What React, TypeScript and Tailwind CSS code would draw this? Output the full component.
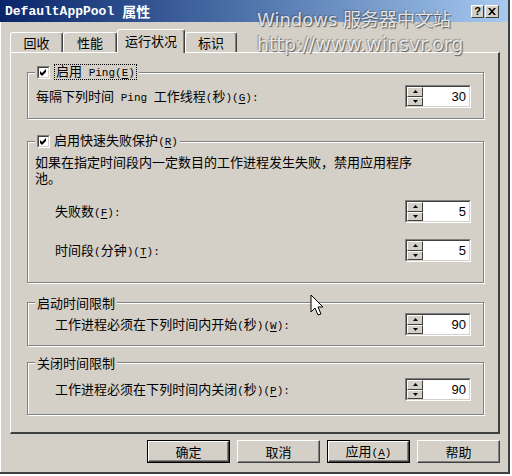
import React from 'react';
import clsx from 'clsx';

// mnemonic letters are marked with "_" in front of them
function Label({ text }: { text: string }) {
  const out: React.ReactNode[] = [];
  let under = false;
  [...text].forEach((ch, i) => {
    if (ch === '_') {
      under = true;
      return;
    }
    const ascii = ch.charCodeAt(0) < 128;
    out.push(
      <span
        key={i}
        className={clsx(ascii && "font-['Liberation_Mono',monospace] text-[11px]", under && 'underline underline-offset-2')}
      >
        {ch === ' ' ? '\u00a0' : ch}
      </span>
    );
    under = false;
  });
  return <span className="whitespace-nowrap">{out}</span>;
}

function Check() {
  return (
    <span className="flex h-[13px] w-[13px] border border-t-[#808080] border-l-[#808080] border-b-white border-r-white">
      <span className="flex flex-1 items-center justify-center border border-t-[#404040] border-l-[#404040] border-b-[#d4d0c8] border-r-[#d4d0c8] bg-white">
        <svg width="7" height="7" viewBox="0 0 7 7">
          <path d="M0 2 L2 4 L6 0 L6 3 L2 7 L0 5 Z" fill="#000" />
        </svg>
      </span>
    </span>
  );
}

function SpinBtn({ up }: { up?: boolean }) {
  return (
    <div className="flex flex-1 items-center justify-center border border-t-white border-l-white border-b-[#404040] border-r-[#404040] bg-[#d4d0c8]">
      <svg width="5" height="3" viewBox="0 0 5 3">
        <path d={up ? 'M2.5 0 L5 3 L0 3 Z' : 'M0 0 L5 0 L2.5 3 Z'} fill="#000" />
      </svg>
    </div>
  );
}

function Spin({ v }: { v: string }) {
  return (
    <div className="flex h-[23px] w-[66px] border border-t-[#808080] border-l-[#808080] border-b-white border-r-white">
      <div className="flex flex-1 border border-t-[#404040] border-l-[#404040] border-b-[#d4d0c8] border-r-[#d4d0c8]">
        <div className="flex w-[16px] flex-col">
          <SpinBtn up />
          <SpinBtn />
        </div>
        <div className="flex flex-1 items-center justify-end bg-white pr-[3px] font-['Liberation_Sans',sans-serif] text-[13px] text-black">
          {v}
        </div>
      </div>
    </div>
  );
}

function Group({ title, className, children }: { title: React.ReactNode; className: string; children?: React.ReactNode }) {
  return (
    <div className={clsx('ml-[16px] mr-[14px] flex flex-col border border-[#808080] shadow-[inset_1px_1px_0_#fff,1px_1px_0_#fff]', className)}>
      <div className="-mt-[9px] ml-[7px] flex h-[16px] w-fit items-center gap-[4px] bg-[#d4d0c8] px-[2px]">{title}</div>
      {children}
    </div>
  );
}

function Row({ text, v, indent, className }: { text: string; v: string; indent?: boolean; className: string }) {
  return (
    <div className={clsx('flex items-center justify-between pr-[12px]', indent ? 'pl-[27px]' : 'pl-[8px]', className)}>
      <Label text={text} />
      <Spin v={v} />
    </div>
  );
}

function Tab({ label, w, active }: { label: string; w: string; active?: boolean }) {
  return (
    <div
      className={clsx(
        'flex items-center justify-center rounded-t-[3px] border-t border-l border-r border-t-white border-l-white border-r-[#404040] bg-[#d4d0c8] shadow-[inset_-1px_0_0_#808080]',
        w,
        active ? 'relative z-10 -mb-px h-[24px] pb-[2px]' : 'h-[20px]'
      )}
    >
      <Label text={label} />
    </div>
  );
}

function Btn({ label, def }: { label: string; def?: boolean }) {
  return (
    <div className={clsx('flex h-[23px] w-[83px]', def && 'border border-black')}>
      <div className="flex flex-1 items-center justify-center border border-t-white border-l-white border-b-[#404040] border-r-[#404040] shadow-[inset_-1px_-1px_0_#808080]">
        <Label text={label} />
      </div>
    </div>
  );
}

export default function App() {
  return (
    <div className="relative h-[476px] w-[512px] overflow-hidden bg-white font-['Noto_Sans_CJK_SC',sans-serif] text-[13px] leading-[15px] text-black">
      <div className="flex h-[474px] w-[510px] flex-col border-r-2 border-b-2 border-r-[#404040] border-b-[#404040] bg-[#d4d0c8]">
        {/* Title bar */}
        <div className="flex h-[22px] items-center justify-between bg-gradient-to-r from-[#0a246a] to-[#a6caf0] pl-[5px] pr-[9px]">
          <div className="flex items-center font-bold text-white">
            <span className="font-['Liberation_Mono',monospace] text-[13px]">DefaultAppPool</span>
            <span className="ml-[8px] text-[14px]">属性</span>
          </div>
          <div className="flex gap-[1px]">
            <div className="flex h-[13px] w-[13px] items-center justify-center border border-t-white border-l-white border-b-[#404040] border-r-[#404040] bg-[#d4d0c8] font-['Liberation_Sans',sans-serif] text-[11px] font-bold leading-none">
              ?
            </div>
            <div className="flex h-[13px] w-[14px] items-center justify-center border border-t-white border-l-white border-b-[#404040] border-r-[#404040] bg-[#d4d0c8]">
              <svg width="8" height="7" viewBox="0 0 8 7">
                <path d="M0 0 L2 0 L4 2.2 L6 0 L8 0 L5 3.5 L8 7 L6 7 L4 4.8 L2 7 L0 7 L3 3.5 Z" fill="#000" />
              </svg>
            </div>
          </div>
        </div>

        <div className="flex flex-1 flex-col pl-[10px] shadow-[inset_1px_0_0_#fff]">
          {/* Tabs */}
          <div className="mt-[7px] flex h-[23px] items-end">
            <Tab label="回收" w="w-[53px]" />
            <Tab label="性能" w="w-[54px]" />
            <Tab label="运行状况" w="w-[68px]" active />
            <Tab label="标识" w="w-[52px]" />
          </div>

          {/* Panel */}
          <div className="flex h-[382px] w-[490px] flex-col border-t border-l border-r-2 border-b-2 border-t-white border-l-white border-r-[#404040] border-b-[#404040] pt-[19px]">
            <Group
              className="h-[47px]"
              title={
                <>
                  <Check />
                  <span className="flex h-[16px] items-center border border-dotted border-black px-[1px]">
                    <Label text="启用 Ping(_E)" />
                  </span>
                </>
              }
            >
              <Row className="mt-[5px]" text="每隔下列时间 Ping 工作线程(秒)(_G):" v="30" />
            </Group>

            <Group
              className="mt-[22px] h-[142px]"
              title={
                <>
                  <Check />
                  <Label text="启用快速失败保护(_R)" />
                </>
              }
            >
              <div className="mt-[5px] pl-[7px] leading-[16px]">
                如果在指定时间段内一定数目的工作进程发生失败，禁用应用程序
                <br />
                池。
              </div>
              <Row className="mt-[14px]" indent text="失败数(_F):" v="5" />
              <Row className="mt-[16px]" indent text="时间段(分钟)(_T):" v="5" />
            </Group>

            <Group className="mt-[19px] h-[44px]" title={<Label text="启动时间限制" />}>
              <Row className="mt-[3px]" indent text="工作进程必须在下列时间内开始(秒)(_W):" v="90" />
            </Group>

            <Group className="mt-[16px] h-[53px]" title={<Label text="关闭时间限制" />}>
              <Row className="mt-[8px]" indent text="工作进程必须在下列时间内关闭(秒)(_P):" v="90" />
            </Group>
          </div>

          {/* Buttons */}
          <div className="mt-[6px] flex w-[490px] justify-end gap-[7px]">
            <Btn label="确定" def />
            <Btn label="取消" />
            <Btn label="应用(_A)" def />
            <Btn label="帮助" />
          </div>
        </div>
      </div>

      {/* site watermark */}
      <div className="pointer-events-none absolute left-[257px] top-[10px] font-['DejaVu_Sans','Noto_Sans_CJK_SC',sans-serif] text-white/80 [text-shadow:1px_1px_1px_rgba(60,60,60,0.8),-1px_-1px_1px_rgba(60,60,60,0.4)]">
        <div className="text-[18px] leading-[20px]">Windows 服务器中文站</div>
        <div className="mt-[4px] text-[19px] leading-[20px]">http://www.winsvr.org</div>
      </div>

      {/* mouse pointer */}
      <svg className="absolute left-[310px] top-[294px]" width="14" height="23" viewBox="0 0 14 23">
        <path d="M1 1 L1 18 L5 14 L8 21 L11 20 L8 13 L13 13 Z" fill="#fff" stroke="#000" strokeWidth="1" strokeLinejoin="miter" />
      </svg>
    </div>
  );
}
